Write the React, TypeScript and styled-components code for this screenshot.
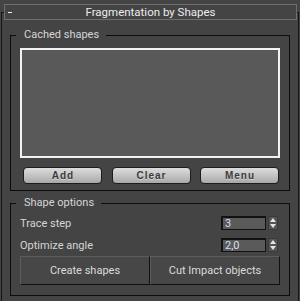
import styled, { createGlobalStyle } from "styled-components";

const GlobalStyle = createGlobalStyle`
    html, body {
        margin: 0;
        padding: 0;
        background: #444444;
    }
    body {
        font-family: Roboto, "Liberation Sans", Arial, sans-serif;
    }
`;

const Page = styled.div`
    width: 300px;
    height: 301px;
    overflow: hidden;
    background: #444444;
    padding-top: 12px;
    box-sizing: border-box;
`;

const Frame = styled.div`
    margin-left: 1px;
    width: 298px;
    height: 289px;
    box-sizing: border-box;
    border: 1px solid #151515;
    border-bottom: none;
    display: flex;
    flex-direction: column;
`;

const Header = styled.div`
    margin: -9px 1px 0 2px;
    height: 16px;
    box-sizing: border-box;
    border: 1px solid #6e6e6e;
    background: #444444;
    display: grid;
    grid-template-columns: 1fr auto 1fr;
    align-items: center;
    color: #ececec;
    font-size: 11.5px;
    line-height: 14px;
`;

const Toggle = styled.span`
    justify-self: start;
    margin-left: 3px;
    width: 4px;
    height: 1px;
    background: #f0f0f0;
`;

const Group = styled.fieldset<{ $top: number }>`
    margin: ${(p) => p.$top}px 8px 0 8px;
    padding: 0;
    border: 1px solid #0c0c0c;
    min-width: 0;
`;

const Legend = styled.legend`
    margin-left: 5px;
    padding: 0 7px 0 8px;
    font-size: 11px;
    line-height: 14px;
    color: #d6d6d6;
`;

const ListBox = styled.div`
    margin: 6px 9px 0 9px;
    height: 110px;
    box-sizing: border-box;
    border: 2px solid #f2f2f2;
    background: #595959;
`;

const ButtonRow = styled.div`
    display: flex;
    justify-content: space-between;
    margin: 9px 10px 6px 12px;
`;

const PillButton = styled.button`
    width: 79px;
    height: 17px;
    padding: 0 0 0 1px;
    box-sizing: border-box;
    border: 1px solid #1c1c1c;
    border-radius: 4px;
    background: linear-gradient(#dcdcdc, #c6c6c6 45%, #a8a8a8);
    color: #3c3c3c;
    font-family: "Liberation Sans", Arial, sans-serif;
    font-size: 10px;
    font-weight: bold;
    letter-spacing: 1px;
    text-shadow: 0 1px 0 rgba(255, 255, 255, 0.4);
`;

const OptionRow = styled.div<{ $top: number }>`
    display: flex;
    align-items: center;
    justify-content: space-between;
    height: 14px;
    margin: ${(p) => p.$top}px 11px 0 9px;
`;

const Label = styled.span`
    font-size: 11px;
    color: #d6d6d6;
`;

const Spinner = styled.div`
    display: flex;
    gap: 2px;
    height: 14px;
`;

const SpinInput = styled.input`
    width: 45px;
    height: 14px;
    box-sizing: border-box;
    margin: 0;
    padding: 0 0 0 2px;
    border: 1px solid #121212;
    border-top-width: 2px;
    border-left-width: 2px;
    background: #5a5a5a;
    color: #d4def2;
    font-family: Roboto, "Liberation Sans", Arial, sans-serif;
    font-size: 11px;
    outline: none;
`;

const Arrows = styled.div`
    width: 10px;
    display: flex;
    flex-direction: column;
    background: #555555;
    border: 1px solid #3a3a3a;
    box-sizing: border-box;
`;

const ArrowButton = styled.button`
    flex: 1;
    padding: 0;
    border: none;
    background: transparent;
    display: flex;
    align-items: center;
    justify-content: center;
`;

const Actions = styled.div`
    display: grid;
    grid-template-columns: 1fr 1fr;
    margin: 4px 9px 10px 9px;
`;

const ActionButton = styled.button`
    height: 29px;
    padding: 0;
    box-sizing: border-box;
    border-style: solid;
    border-width: 1px;
    border-color: #5c5c5c #101010 #101010 #5c5c5c;
    background: #474747;
    color: #dcdcdc;
    font-family: Roboto, "Liberation Sans", Arial, sans-serif;
    font-size: 11px;
`;

function Arrow({ up }: { up?: boolean }) {
    return (
        <svg width="6" height="4" viewBox="0 0 6 4">
            <path d={up ? "M0 4 L3 0 L6 4 Z" : "M0 0 L6 0 L3 4 Z"} fill="#e4e4e4" />
        </svg>
    );
}

function SpinField({ value }: { value: string }) {
    return (
        <Spinner>
            <SpinInput defaultValue={value} readOnly />
            <Arrows>
                <ArrowButton><Arrow up /></ArrowButton>
                <ArrowButton><Arrow /></ArrowButton>
            </Arrows>
        </Spinner>
    );
}

export default function App() {
    return (
        <>
            <GlobalStyle />
            <Page>
                <Frame>
                    <Header>
                        <Toggle />
                        <span>Fragmentation by Shapes</span>
                        <span />
                    </Header>

                    <Group $top={8}>
                        <Legend>Cached shapes</Legend>
                        <ListBox />
                        <ButtonRow>
                            <PillButton>Add</PillButton>
                            <PillButton>Clear</PillButton>
                            <PillButton>Menu</PillButton>
                        </ButtonRow>
                    </Group>

                    <Group $top={5}>
                        <Legend>Shape options</Legend>
                        <OptionRow $top={6}>
                            <Label>Trace step</Label>
                            <SpinField value="3" />
                        </OptionRow>
                        <OptionRow $top={8}>
                            <Label>Optimize angle</Label>
                            <SpinField value="2,0" />
                        </OptionRow>
                        <Actions>
                            <ActionButton>Create shapes</ActionButton>
                            <ActionButton>Cut Impact objects</ActionButton>
                        </Actions>
                    </Group>
                </Frame>
            </Page>
        </>
    );
}
